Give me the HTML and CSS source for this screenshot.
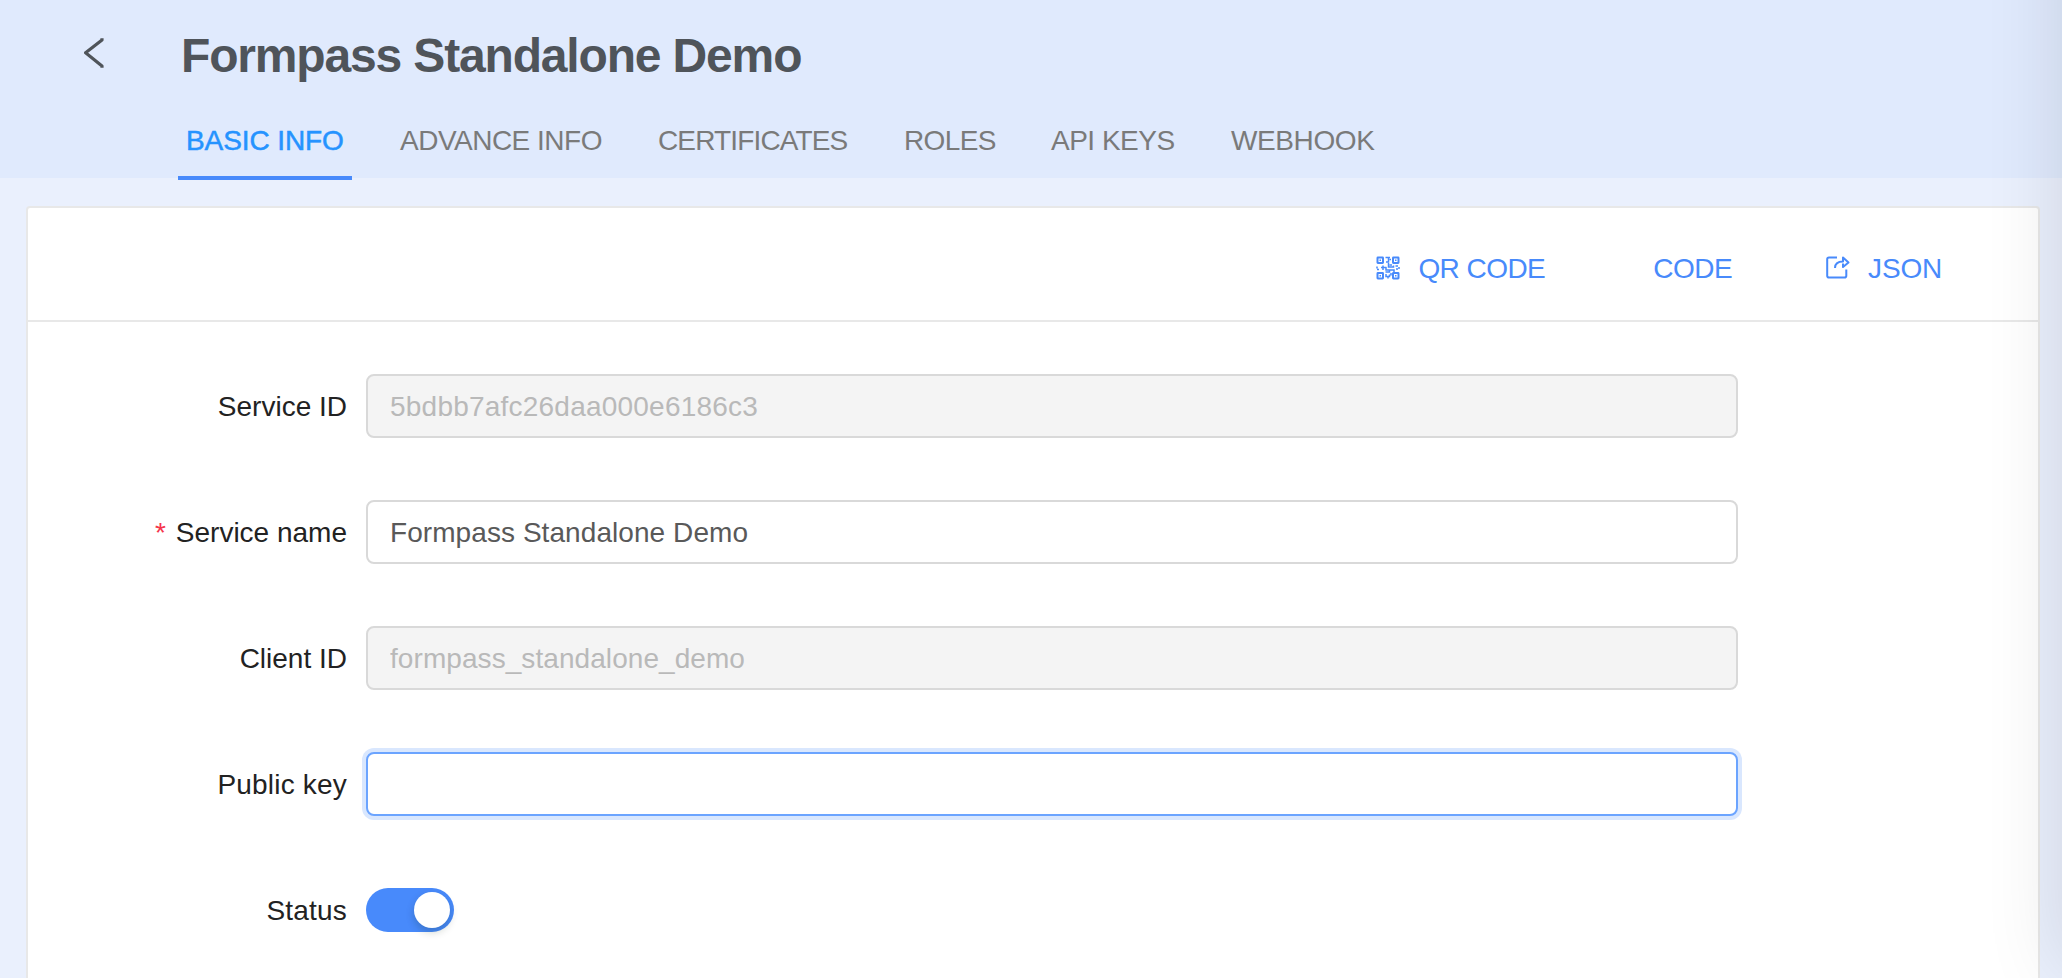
FILE: index.html
```html
<!DOCTYPE html>
<html lang="en">
<head>
<meta charset="utf-8">
<title>Formpass Standalone Demo</title>
<link rel="stylesheet" href="styles.css">
</head>
<body>
<div class="page">
  <header class="header">
    <div class="heading">
      <svg class="back" viewBox="0 0 20 30" fill="none" stroke="#4f545a" stroke-width="3.2" stroke-linecap="square" stroke-linejoin="round"><path d="M18 1.800V2.100L1.600 14.800L18 27.900V28.200"/></svg>
      <h1 class="title">Formpass Standalone Demo</h1>
    </div>
    <nav class="tabs">
      <a class="tab tab-basic active">BASIC INFO</a>
      <a class="tab tab-advance">ADVANCE INFO</a>
      <a class="tab tab-certificates">CERTIFICATES</a>
      <a class="tab tab-roles">ROLES</a>
      <a class="tab tab-keys">API KEYS</a>
      <a class="tab tab-webhook">WEBHOOK</a>
    </nav>
  </header>
  <main class="card">
    <div class="toolbar">
      <a class="action action-qr">
        <svg class="icon" viewBox="0 0 24 24" fill="none" stroke="currentColor" stroke-width="2"><rect x="1.500" y="1.500" width="5.500" height="5.500" rx=".4"/><rect x="17" y="1.500" width="5.500" height="5.500" rx=".4"/><rect x="1.500" y="17" width="5.500" height="5.500" rx=".4"/><rect x="17" y="17" width="5.500" height="5.500" rx=".4"/><path stroke-width="1.500" d="M3.500 4.250H5M19 4.250H20.500M3.500 19.750H5M19 19.750H20.500M9.500 1.500H14M12.500 1V6H10M13.500 3.500H15M1 10.500V12.500M1 13.500H3M5 11.500H10.500M7 9.500V14M12.500 7V11H17.500V9.500M10 11V14H18V16M13.500 9H16M19.500 10H22M23 11V13M20 13H22M9.500 16H13.500V14M10 18V20.500H13.500V18.500M12 22.500V20M15 17V19.500"/></svg>
        <span>QR CODE</span>
      </a>
      <a class="action action-code"><span>CODE</span></a>
      <a class="action action-json">
        <svg class="icon" viewBox="0 0 24 24" fill="none" stroke="currentColor" stroke-width="2" stroke-linejoin="round"><path d="M11 1.500H3Q1.200 1.500 1.200 3.300V19.700Q1.200 21.500 3 21.500H18.500Q20.300 21.500 20.300 19.700V13.500"/><path d="M9 12C9 8 12 5.500 17 5.500V1.500L22.500 6.500L17 11V7.500"/></svg>
        <span>JSON</span>
      </a>
    </div>
    <form class="form">
      <div class="row"><label class="label" for="sid">Service ID</label><input class="input sid" id="sid" value="5bdbb7afc26daa000e6186c3" disabled></div>
      <div class="row"><label class="label required" for="name">Service name</label><input class="input" id="name" value="Formpass Standalone Demo"></div>
      <div class="row"><label class="label" for="cid">Client ID</label><input class="input" id="cid" value="formpass_standalone_demo" disabled></div>
      <div class="row"><label class="label wide" for="key">Public key</label><input class="input focused" id="key"></div>
      <div class="row"><span class="label wide">Status</span><span class="switch"><span class="knob"></span></span></div>
    </form>
  </main>
  <div class="edge-shadow"></div>
</div>
</body>
</html>
```
FILE: styles.css
```css
* { box-sizing: border-box; }
body {
  margin: 0;
  font-family: "Liberation Sans", Arial, sans-serif;
  font-size: 28px;
  line-height: 32px;
  color: #222;
}
.page {
  position: relative;
  height: 978px;
  overflow: hidden;
  background: #eaf0fd;
}
.header {
  height: 178px;
  padding: 28px 0 0 84px;
  background: #e0eafd;
}
.heading { display: flex; align-items: flex-start; }
.back { width: 20px; height: 30px; margin-top: 10px; }
.title {
  margin: 0 0 0 77px;
  font-size: 48px;
  line-height: 56px;
  letter-spacing: -1.16px;
  color: #4f545a;
}
.tabs {
  display: flex;
  gap: 40px;
  height: 96px;
  margin-left: 94px;
}
.tab {
  flex: none;
  height: 96px;
  padding: 41px 8px 0;
  white-space: nowrap;
  color: #7a7a7a;
}
.tab.active {
  color: #2593ff;
  border-bottom: 4px solid #488afb;
  letter-spacing: -0.1px;
  -webkit-text-stroke: 0.5px #2593ff;
}
.tab-basic { width: 174px; }
.tab-advance { width: 218px; letter-spacing: -0.5px; }
.tab-certificates { width: 206px; letter-spacing: -0.85px; }
.tab-roles { width: 107px; letter-spacing: -0.6px; }
.tab-keys { width: 140px; letter-spacing: -0.5px; }
.tab-webhook { letter-spacing: -0.4px; }
.card {
  margin: 28px 22px 0 26px;
  height: 800px;
  border: 2px solid #e8e8e8;
  border-radius: 4px;
  background: #fff;
}
.toolbar {
  display: flex;
  justify-content: flex-end;
  height: 114px;
  padding: 45px 96px 0 0;
  border-bottom: 2px solid #e8e8e8;
  color: #488afb;
}
.action { display: flex; white-space: nowrap; }
.icon { width: 24px; height: 24px; margin: 3px 18px 0 0; }
.action-qr { letter-spacing: -0.55px; margin-right: 108px; }
.action-code { letter-spacing: -0.5px; margin-right: 94px; }
.action-json { letter-spacing: -0.2px; }
.form { padding-top: 52px; }
.row {
  display: flex;
  align-items: center;
  height: 64px;
  margin-bottom: 62px;
}
.label {
  width: 319px;
  padding-top: 2px;
  margin-right: 19px;
  text-align: right;
}
.label.wide { letter-spacing: 0.2px; }
.required::before {
  content: "*";
  margin-right: 10px;
  color: #f5354b;
}
.input {
  width: 1372px;
  height: 64px;
  padding: 1px 22px 0;
  border: 2px solid #d9d9d9;
  border-radius: 8px;
  outline: none;
  background: #fff;
  font: inherit;
  letter-spacing: 0.07px;
  color: #595959;
}
.input:disabled { background: #f4f4f4; color: #b9b9b9; }
.input.sid { letter-spacing: 0.22px; }
.input.focused { border-color: #6ba4ff; box-shadow: 0 0 0 4px #d9e7fe; }
.switch {
  display: flex;
  justify-content: flex-end;
  width: 88px;
  height: 44px;
  padding: 4px;
  border-radius: 22px;
  background: #488afb;
}
.knob {
  width: 36px;
  height: 36px;
  border-radius: 50%;
  background: #fff;
  box-shadow: 0 4px 8px rgba(0, 35, 11, 0.2);
}
.edge-shadow {
  position: absolute;
  top: -100px;
  left: 2062px;
  width: 200px;
  height: 1070px;
  box-shadow: 0 0 80px rgba(0, 0, 0, 0.12);
}
```
